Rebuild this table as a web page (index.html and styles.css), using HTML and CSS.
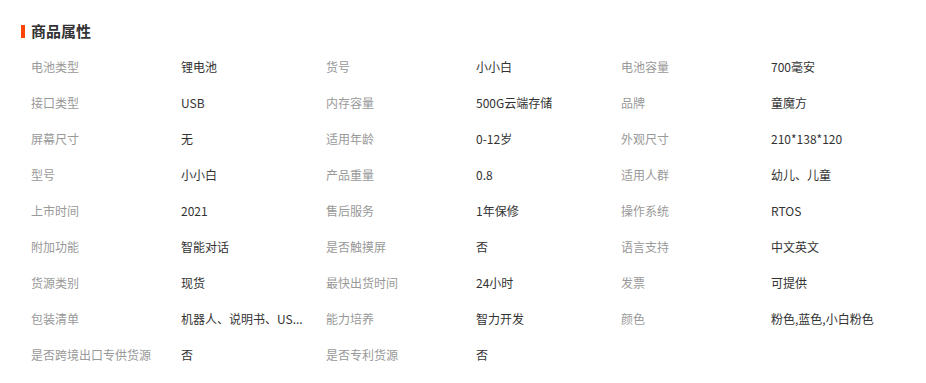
FILE: index.html
```html
<!DOCTYPE html>
<html lang="zh-CN">
<head>
<meta charset="utf-8">
<link rel="stylesheet" href="styles.css">
</head>
<body>
<div class="attrs">
  <h3 class="attrs-title"><span class="bar"></span>商品属性</h3>
  <dl class="attrs-grid">
    <dt>电池类型</dt><dd>锂电池</dd>
    <dt>货号</dt><dd>小小白</dd>
    <dt>电池容量</dt><dd>700毫安</dd>
    <dt>接口类型</dt><dd>USB</dd>
    <dt>内存容量</dt><dd>500G云端存储</dd>
    <dt>品牌</dt><dd>童魔方</dd>
    <dt>屏幕尺寸</dt><dd>无</dd>
    <dt>适用年龄</dt><dd>0-12岁</dd>
    <dt>外观尺寸</dt><dd>210*138*120</dd>
    <dt>型号</dt><dd>小小白</dd>
    <dt>产品重量</dt><dd>0.8</dd>
    <dt>适用人群</dt><dd>幼儿、儿童</dd>
    <dt>上市时间</dt><dd>2021</dd>
    <dt>售后服务</dt><dd>1年保修</dd>
    <dt>操作系统</dt><dd>RTOS</dd>
    <dt>附加功能</dt><dd>智能对话</dd>
    <dt>是否触摸屏</dt><dd>否</dd>
    <dt>语言支持</dt><dd>中文英文</dd>
    <dt>货源类别</dt><dd>现货</dd>
    <dt>最快出货时间</dt><dd>24小时</dd>
    <dt>发票</dt><dd>可提供</dd>
    <dt>包装清单</dt><dd>机器人、说明书、US...</dd>
    <dt>能力培养</dt><dd>智力开发</dd>
    <dt>颜色</dt><dd>粉色,蓝色,小白粉色</dd>
    <dt>是否跨境出口专供货源</dt><dd>否</dd>
    <dt>是否专利货源</dt><dd>否</dd>
  </dl>
</div>
</body>
</html>
```
FILE: styles.css
```css
* { box-sizing: border-box; }
html, body { margin: 0; padding: 0; background: #fff; }
body {
  font-family: "Noto Sans CJK SC", "Liberation Sans", sans-serif;
  font-size: 12px;
  color: #333;
}
.attrs {
  padding: 21px 0 0 21px;
}
.attrs-title {
  display: flex;
  align-items: center;
  gap: 6px;
  margin: 0;
  height: 20px;
  line-height: 20px;
  font-size: 15px;
  font-weight: bold;
  color: #333;
}
.bar {
  width: 4px;
  height: 13px;
  background: #ff4400;
}
.attrs-grid {
  display: grid;
  grid-template-columns: repeat(3, 150px 145px);
  grid-auto-rows: 36px;
  margin: 8px 0 0 10px;
  padding: 0;
}
.attrs-grid dt,
.attrs-grid dd {
  margin: 0;
  line-height: 36px;
  white-space: nowrap;
}
.attrs-grid dt {
  color: #999;
}
.attrs-grid dd {
  color: #333;
}
```
